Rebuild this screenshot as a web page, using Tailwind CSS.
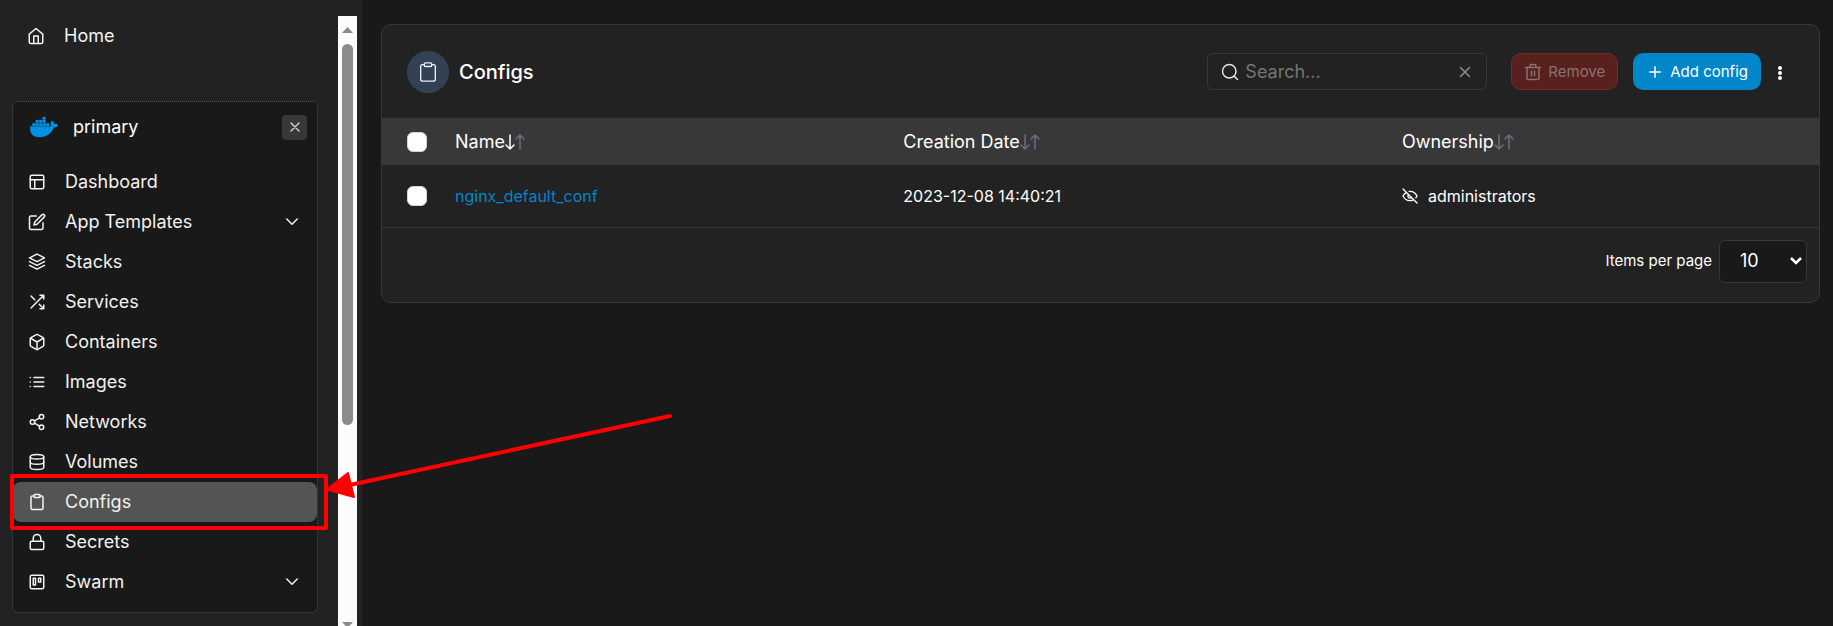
<!DOCTYPE html>
<html lang="en">
<head>
<meta charset="utf-8">
<meta name="viewport" content="width=device-width, initial-scale=1">
<title>Configs</title>
<script src="https://cdn.jsdelivr.net/npm/@tailwindcss/browser@4"></script>
</head>
<body class="relative flex h-screen overflow-hidden bg-[#191919] font-['Inter',sans-serif] text-lg text-white">

<!-- Sidebar -->
<aside class="flex w-[362px] shrink-0 overflow-hidden bg-[#222222] pr-[5px]">
  <nav class="flex-1 pl-3 pr-5 pt-4 text-[#f2f2f2]" aria-label="Main">
    <a href="#" class="flex h-10 items-center pl-[15px]">
      <svg class="mr-[19px] size-[18px]" viewBox="0 0 24 24" fill="none" stroke="currentColor" stroke-width="2" stroke-linecap="round" stroke-linejoin="round"><path d="M3 9.500 12 2l9 7.500V20a2 2 0 0 1-2 2H5a2 2 0 0 1-2-2z"/><path d="M9 22V12h6v10"/></svg>
      Home
    </a>

    <section class="mt-[45px] rounded-md border border-dotted border-[#475569] bg-[#191919] pb-[10px]">
      <div class="flex h-[50px] items-center pl-[17px] pr-[10px] text-white">
        <svg class="mr-[15px] size-7" viewBox="0 0 24 24" fill="#0091e2"><path d="M13.983 11.078h2.119a.186.186 0 00.186-.185V9.006a.186.186 0 00-.186-.186h-2.119a.185.185 0 00-.185.185v1.888c0 .102.083.185.185.185m-2.954-5.43h2.118a.186.186 0 00.186-.186V3.574a.186.186 0 00-.186-.185h-2.118a.185.185 0 00-.185.185v1.888c0 .102.082.185.185.185m0 2.716h2.118a.187.187 0 00.186-.186V6.290a.186.186 0 00-.186-.185h-2.118a.185.185 0 00-.185.185v1.887c0 .102.082.185.185.186m-2.930 0h2.120a.186.186 0 00.184-.186V6.290a.185.185 0 00-.185-.185H8.100a.185.185 0 00-.185.185v1.887c0 .102.083.185.185.186m-2.964 0h2.119a.186.186 0 00.185-.186V6.290a.185.185 0 00-.185-.185H5.136a.186.186 0 00-.186.185v1.887c0 .102.084.185.186.186m5.893 2.715h2.118a.186.186 0 00.186-.185V9.006a.186.186 0 00-.186-.186h-2.118a.185.185 0 00-.185.185v1.888c0 .102.082.185.185.185m-2.930 0h2.120a.185.185 0 00.184-.185V9.006a.185.185 0 00-.184-.186h-2.120a.185.185 0 00-.184.185v1.888c0 .102.083.185.185.185m-2.964 0h2.119a.185.185 0 00.185-.185V9.006a.185.185 0 00-.184-.186h-2.120a.186.186 0 00-.186.186v1.887c0 .102.084.185.186.185m-2.920 0h2.120a.185.185 0 00.184-.185V9.006a.185.185 0 00-.184-.186h-2.120a.185.185 0 00-.184.185v1.888c0 .102.083.185.185.185M23.763 9.890c-.065-.051-.672-.510-1.954-.510-.338.001-.676.030-1.010.087-.248-1.700-1.653-2.530-1.716-2.566l-.344-.199-.226.327c-.284.438-.490.922-.612 1.430-.230.970-.090 1.882.403 2.661-.595.332-1.550.413-1.744.420H.751a.751.751 0 00-.750.748 11.376 11.376 0 00.692 4.062c.545 1.428 1.355 2.480 2.410 3.124 1.180.723 3.100 1.137 5.275 1.137.983.003 1.963-.086 2.930-.266a12.248 12.248 0 003.823-1.389c.980-.567 1.860-1.288 2.610-2.136 1.252-1.418 1.998-2.997 2.553-4.400h.221c1.372 0 2.215-.549 2.680-1.009.309-.293.550-.650.707-1.046l.098-.288Z" stroke="#0091e2" stroke-width=".25"/></svg>
        <span class="flex-1">primary</span>
        <button type="button" aria-label="Close environment" class="flex size-[25px] items-center justify-center rounded bg-[#383838] text-[#d4d4d8]">
          <svg class="size-4" viewBox="0 0 24 24" fill="none" stroke="currentColor" stroke-width="2" stroke-linecap="round"><path d="M18 6 6 18M6 6l12 12"/></svg>
        </button>
      </div>

      <ul class="mt-[10px] [&_a]:flex [&_a]:h-10 [&_a]:items-center [&_a]:rounded-lg [&_a]:pl-[15px] [&_a]:pr-4 [&_svg]:size-[18px] [&_svg]:fill-none [&_svg]:stroke-current [&_svg]:stroke-2 [&_span]:ml-[19px] [&_span]:flex-1">
        <li><a href="#"><svg viewBox="0 0 24 24" stroke-linecap="round" stroke-linejoin="round"><rect x="3" y="3" width="18" height="18" rx="2"/><path d="M3 9h18M9 21V9"/></svg><span>Dashboard</span></a></li>
        <li><a href="#"><svg viewBox="0 0 24 24" stroke-linecap="round" stroke-linejoin="round"><path d="M11 4H4a2 2 0 0 0-2 2v14a2 2 0 0 0 2 2h14a2 2 0 0 0 2-2v-7"/><path d="M18.500 2.500a2.121 2.121 0 0 1 3 3L12 15l-4 1 1-4z"/></svg><span>App Templates</span><svg viewBox="0 0 24 24" stroke-linecap="round" stroke-linejoin="round"><path d="m5 8 7 7 7-7"/></svg></a></li>
        <li><a href="#"><svg viewBox="0 0 24 24" stroke-linecap="round" stroke-linejoin="round"><path d="M12 1.500 2 6.500l10 5 10-5z"/><path d="m2 11.500 10 5 10-5"/><path d="m2 16.500 10 5 10-5"/></svg><span>Stacks</span></a></li>
        <li><a href="#"><svg viewBox="0 0 24 24" stroke-linecap="round" stroke-linejoin="round"><path d="M16 3h5v5M4 20 21 3M21 16v5h-5M15 15l6 6M4 4l5 5"/></svg><span>Services</span></a></li>
        <li><a href="#"><svg viewBox="0 0 24 24" stroke-linecap="round" stroke-linejoin="round"><path d="M21 16V8a2 2 0 0 0-1-1.730l-7-4a2 2 0 0 0-2 0l-7 4A2 2 0 0 0 3 8v8a2 2 0 0 0 1 1.730l7 4a2 2 0 0 0 2 0l7-4A2 2 0 0 0 21 16z"/><path d="M3.270 6.960 12 12.010l8.730-5.050M12 22.080V12"/></svg><span>Containers</span></a></li>
        <li><a href="#"><svg viewBox="0 0 24 24" stroke-linecap="round" stroke-linejoin="round"><path d="M8 6h13M8 12h13M8 18h13M3 6h.010M3 12h.010M3 18h.010"/></svg><span>Images</span></a></li>
        <li><a href="#"><svg viewBox="0 0 24 24" stroke-linecap="round" stroke-linejoin="round"><circle cx="18" cy="5" r="3"/><circle cx="6" cy="12" r="3"/><circle cx="18" cy="19" r="3"/><path d="m8.590 13.510 6.830 3.980M15.410 6.510l-6.820 3.980"/></svg><span>Networks</span></a></li>
        <li><a href="#"><svg viewBox="0 0 24 24" stroke-linecap="round" stroke-linejoin="round"><ellipse cx="12" cy="5" rx="9" ry="3"/><path d="M21 12c0 1.660-4 3-9 3s-9-1.340-9-3"/><path d="M3 5v14c0 1.660 4 3 9 3s9-1.340 9-3V5"/></svg><span>Volumes</span></a></li>
        <li><a href="#" aria-current="page" class="bg-[#545454]"><svg viewBox="0 0 24 24" stroke-linecap="round" stroke-linejoin="round"><rect x="8" y="2" width="8" height="4" rx="1"/><path d="M16 4h2a2 2 0 0 1 2 2v14a2 2 0 0 1-2 2H6a2 2 0 0 1-2-2V6a2 2 0 0 1 2-2h2"/></svg><span>Configs</span></a></li>
        <li><a href="#"><svg viewBox="0 0 24 24" stroke-linecap="round" stroke-linejoin="round"><rect x="3" y="11" width="18" height="11" rx="2"/><path d="M7 11V7a5 5 0 0 1 10 0v4"/></svg><span>Secrets</span></a></li>
        <li><a href="#"><svg viewBox="0 0 24 24" stroke-linecap="round" stroke-linejoin="round"><rect x="3" y="3" width="18" height="18" rx="2"/><path d="M7 7h3v9H7zM14 7h3v5h-3z"/></svg><span>Swarm</span><svg viewBox="0 0 24 24" stroke-linecap="round" stroke-linejoin="round"><path d="m5 8 7 7 7-7"/></svg></a></li>
      </ul>
    </section>
  </nav>

  <!-- Scroll track -->
  <div class="mt-4 flex w-[19px] flex-col items-center bg-[#fcfcfc] pt-[11px]" aria-hidden="true">
    <svg class="h-[6px] w-[11px] shrink-0" viewBox="0 0 11 6" fill="#8b8b8b"><path d="M5.500 0 11 6H0z"/></svg>
    <div class="flex w-[11px] flex-1 flex-col pt-[11px]">
      <div class="h-[66%] rounded-full bg-[#8b8b8b]"></div>
    </div>
    <svg class="h-1 w-[11px] shrink-0" viewBox="0 0 11 4" fill="#8b8b8b"><path d="M0 0h11L7.330 4H3.670z"/></svg>
  </div>
</aside>

<!-- Content -->
<main class="min-w-0 flex-1 pl-[19px] pr-[13px] pt-6">
  <section class="overflow-hidden rounded-[10px] border border-[#383838] bg-[#222222]">
    <header class="flex h-[93px] items-center pl-[25px] pr-[34px]">
      <span class="mr-[10px] flex size-[42px] items-center justify-center rounded-full bg-[#344155] text-[#e0f2fe]">
        <svg class="size-[22px]" viewBox="0 0 24 24" fill="none" stroke="currentColor" stroke-width="1.500" stroke-linecap="round" stroke-linejoin="round"><rect x="8" y="2" width="8" height="4" rx="1"/><path d="M16 4h2a2 2 0 0 1 2 2v14a2 2 0 0 1-2 2H6a2 2 0 0 1-2-2V6a2 2 0 0 1 2-2h2"/></svg>
      </span>
      <h1 class="flex-1 text-xl font-medium">Configs</h1>

      <div class="mr-6 flex h-[37px] w-[280px] items-center rounded-md border border-[#383838] pl-[13px] pr-3">
        <svg class="mr-1.5 size-[18px] shrink-0 text-[#e5e5e5]" viewBox="0 0 24 24" fill="none" stroke="currentColor" stroke-width="2" stroke-linecap="round"><circle cx="11" cy="11" r="9"/><path d="m22 22-4.500-4.500"/></svg>
        <input type="text" aria-label="Search" placeholder="Search..." class="min-w-0 flex-1 bg-transparent outline-none placeholder:text-[#757575]">
        <button type="button" aria-label="Clear search" class="text-[#8f8f8f]">
          <svg class="size-[18px]" viewBox="0 0 24 24" fill="none" stroke="currentColor" stroke-width="2" stroke-linecap="round"><path d="M18 6 6 18M6 6l12 12"/></svg>
        </button>
      </div>

      <button type="button" disabled class="mr-[15px] flex h-[37px] items-center gap-1.5 rounded-[10px] border border-[#752a26] bg-[#58211e] px-3 text-[15px] text-[#8b7271]">
        <svg class="size-[18px]" viewBox="0 0 24 24" fill="none" stroke="currentColor" stroke-width="2" stroke-linecap="round" stroke-linejoin="round"><path d="M2 6h20M20 6v14a2 2 0 0 1-2 2H6a2 2 0 0 1-2-2V6M8 6V4a2 2 0 0 1 2-2h4a2 2 0 0 1 2 2v2M10 11v6M14 11v6"/></svg>
        Remove
      </button>
      <button type="button" class="flex h-[37px] items-center gap-1.5 rounded-[10px] bg-[#0086c9] px-[13px] text-[15px]">
        <svg class="size-[18px]" viewBox="0 0 24 24" fill="none" stroke="currentColor" stroke-width="2" stroke-linecap="round"><path d="M12 5v14M5 12h14"/></svg>
        Add config
      </button>
      <button type="button" aria-label="More options" class="ml-[14px] pt-0.5">
        <svg class="h-[14px] w-[10px]" viewBox="0 0 10 14" fill="currentColor"><circle cx="5" cy="2" r="2"/><circle cx="5" cy="7" r="2"/><circle cx="5" cy="12" r="2"/></svg>
      </button>
    </header>

    <table class="w-full table-fixed text-left">
      <colgroup><col class="w-[73px]"><col class="w-[31.200%]"><col class="w-[34.700%]"><col></colgroup>
      <thead class="bg-[#383838]">
        <tr class="h-[47px] [&_button]:flex [&_button]:items-center [&_button]:font-normal [&_svg]:h-4 [&_svg]:w-5 [&_svg]:fill-none [&_svg]:stroke-[1.500px]">
          <th class="pl-[25px]"><input type="checkbox" aria-label="Select all" class="block size-5 appearance-none rounded-md border border-[#d0d5dd] bg-white"></th>
          <th><button type="button">Name<svg viewBox="0 0 20 16" stroke-linecap="round" stroke-linejoin="round"><path class="stroke-white" d="M5 1v14M1 11l4 4 4-4"/><path class="stroke-[#667085]" d="M15 15V1M11 5l4-4 4 4"/></svg></button></th>
          <th><button type="button">Creation Date<svg viewBox="0 0 20 16" stroke-linecap="round" stroke-linejoin="round"><path class="stroke-[#667085]" d="M5 1v14M1 11l4 4 4-4M15 15V1M11 5l4-4 4 4"/></svg></button></th>
          <th><button type="button">Ownership<svg viewBox="0 0 20 16" stroke-linecap="round" stroke-linejoin="round"><path class="stroke-[#667085]" d="M5 1v14M1 11l4 4 4-4M15 15V1M11 5l4-4 4 4"/></svg></button></th>
        </tr>
      </thead>
      <tbody class="text-base">
        <tr class="h-[62px] border-b border-[#383838]">
          <td class="pl-[25px]"><input type="checkbox" aria-label="Select nginx_default_conf" class="block size-5 appearance-none rounded-md border border-[#d0d5dd] bg-white"></td>
          <td><a href="#" class="text-[#0086c9]">nginx_default_conf</a></td>
          <td>2023-12-08 14:40:21</td>
          <td><span class="flex items-center gap-[10px]"><svg class="size-4" viewBox="0 0 24 24" fill="none" stroke="currentColor" stroke-width="2" stroke-linecap="round" stroke-linejoin="round"><path d="M9.880 9.880a3 3 0 1 0 4.240 4.240M10.730 5.080A10.430 10.430 0 0 1 12 5c7 0 10.500 7 10.500 7a13.160 13.160 0 0 1-1.670 2.680M6.610 6.610A13.526 13.526 0 0 0 1.500 12s3.500 7 10.500 7a9.740 9.740 0 0 0 5.390-1.610M1.500 1.500l21 21"/></svg>administrators</span></td>
        </tr>
      </tbody>
    </table>

    <footer class="flex items-center justify-end gap-[7px] pb-[19px] pr-3 pt-3">
      <label for="per-page" class="text-[15px]">Items per page</label>
      <div class="relative">
        <select id="per-page" class="h-[43px] w-[88px] appearance-none rounded-md border border-[#383838] bg-[#191919] pl-5"><option>10</option><option>25</option><option>50</option><option>100</option></select>
        <svg class="pointer-events-none absolute right-[5px] top-[17px] h-2 w-3" viewBox="0 0 12 8" fill="none" stroke="currentColor" stroke-width="2.500"><path d="m1 1 5 5 5-5"/></svg>
      </div>
    </footer>
  </section>
</main>

<!-- Red callout around the active item -->
<svg class="pointer-events-none absolute left-0 top-0 h-[626px] w-[700px]" viewBox="0 0 700 626" fill="none" stroke="#ff0000" stroke-width="4" stroke-linejoin="round" stroke-linecap="round" aria-hidden="true">
  <rect x="12" y="476" width="314" height="52"/>
  <path d="M352 484.500 670 416"/>
  <path d="M327 489.500 348 473l6 24z" fill="#ff0000" stroke-width="2"/>
</svg>
</body>
</html>
